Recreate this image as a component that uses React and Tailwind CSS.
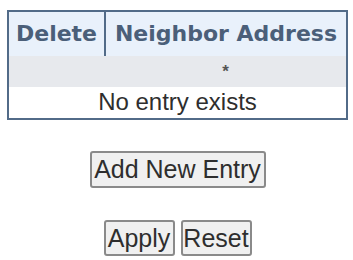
import React from 'react';

export default function App() {
  return (
    <div className="h-[260px] w-[353px] overflow-hidden bg-white pl-[7px] pt-[10px]">
      <div className="w-[341px]">
        <table className="w-full border-collapse border-2 border-[#526b88]">
          <thead>
            <tr className="h-[45px] bg-[#e9f1fb] font-['DejaVu_Sans',sans-serif] text-[22px] font-bold text-[#4b5f79]">
              <th className="w-[97px] border-r-2 border-[#526b88] text-center leading-none">Delete</th>
              <th className="text-center leading-none whitespace-nowrap">Neighbor Address</th>
            </tr>
          </thead>
          <tbody>
            <tr className="h-[31px] bg-[#e7e9ed]">
              <td></td>
              <td className="text-center font-['Liberation_Sans',sans-serif] text-[17px] font-bold text-[#555]">*</td>
            </tr>
            <tr className="h-[32px] bg-white">
              <td colSpan={2} className="pb-[2px] text-center font-['Liberation_Sans',sans-serif] text-[24px] leading-none text-[#2e2e2e]">
                No entry exists
              </td>
            </tr>
          </tbody>
        </table>

        <div className="mt-[31px] flex justify-center">
          <button className="h-[37px] w-[176px] rounded-[3px] border-2 border-[#8a8a8a] bg-[#f0f0f0] font-['Liberation_Sans',sans-serif] text-[25px] leading-none text-[#2e2e2e]">
            Add New Entry
          </button>
        </div>

        <div className="mt-[32px] flex justify-center gap-[6px]">
          <button className="h-[36px] w-[71px] rounded-[3px] border-2 border-[#8a8a8a] bg-[#f0f0f0] font-['Liberation_Sans',sans-serif] text-[25px] leading-none text-[#2e2e2e]">
            Apply
          </button>
          <button className="h-[36px] w-[71px] rounded-[3px] border-2 border-[#8a8a8a] bg-[#f0f0f0] font-['Liberation_Sans',sans-serif] text-[25px] leading-none text-[#2e2e2e]">
            Reset
          </button>
        </div>
      </div>
    </div>
  );
}
